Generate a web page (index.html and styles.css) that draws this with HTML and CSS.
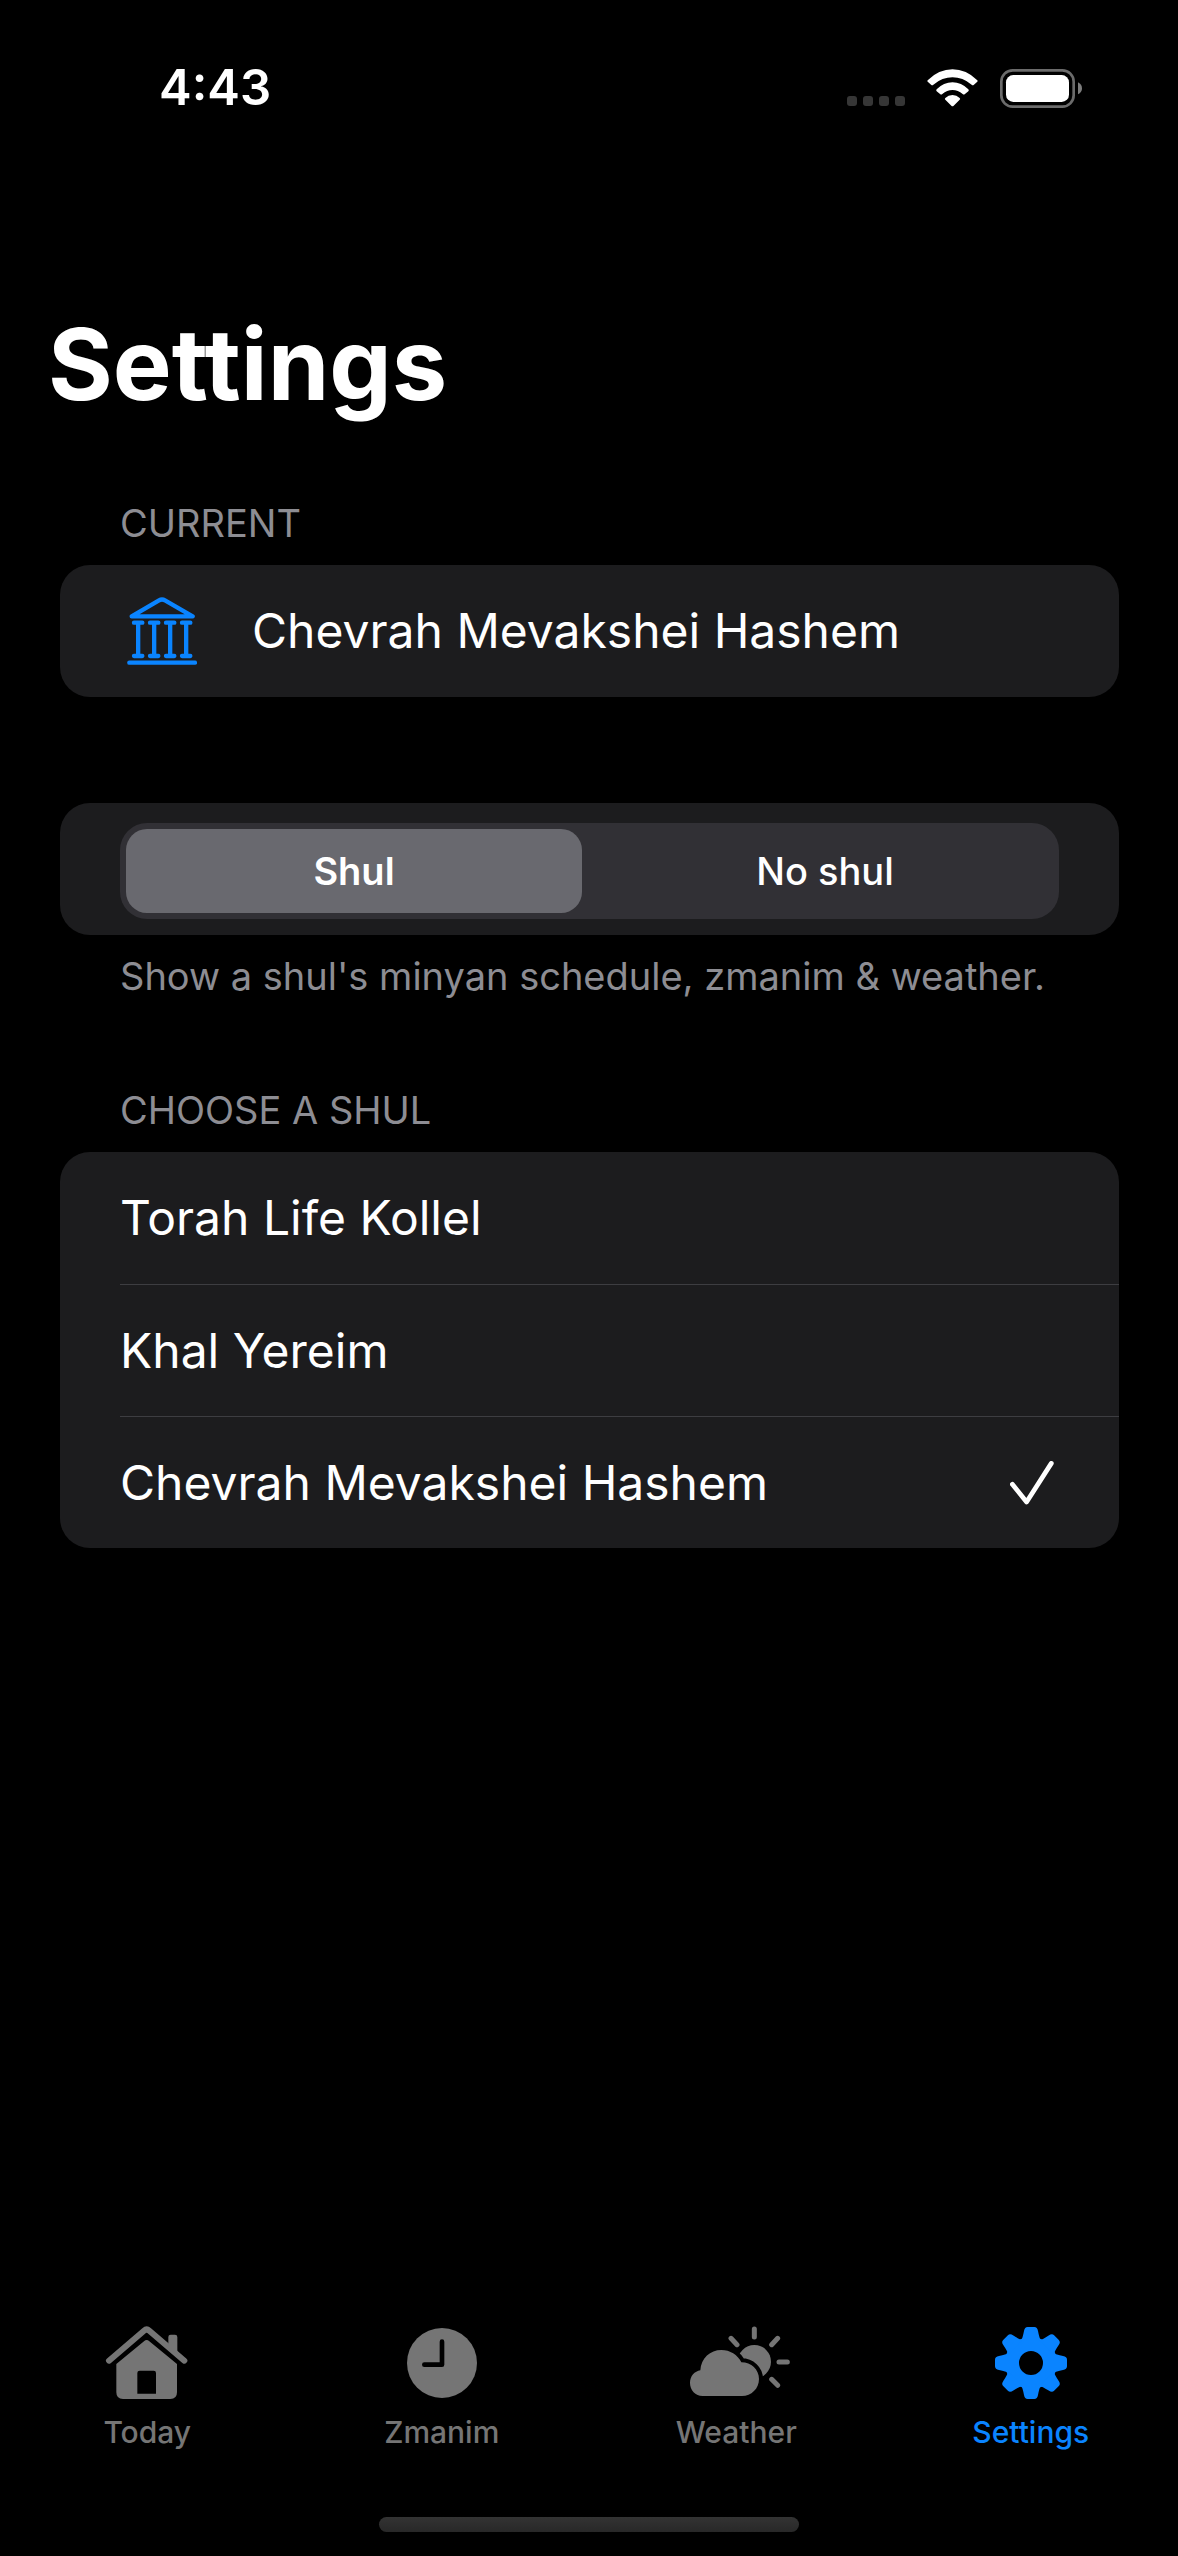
FILE: index.html
```html
<!DOCTYPE html>
<html lang="en">
<head>
<meta charset="utf-8">
<meta name="viewport" content="width=device-width, initial-scale=1">
<title>Settings</title>
<link rel="stylesheet" href="styles.css">
</head>
<body>
<div class="app">
  <header class="status-bar">
    <time class="clock">4:43</time>
    <div class="status-icons">
      <svg class="cell-icon" viewBox="0 0 58 10" aria-hidden="true"><rect width="10" height="10" rx="3"/><rect x="16" width="10" height="10" rx="3"/><rect x="32" width="10" height="10" rx="3"/><rect x="48" width="10" height="10" rx="3"/></svg>
      <svg class="wifi-icon" viewBox="0 0 153 114" aria-hidden="true"><path d="M3 33Q-1 36 3 39L13 48Q16 50 19 47Q46 25 76.500 25T134 47Q137 50 140 48L150 39Q154 36 150 33Q117 1 76.500 1T3 33Z"/><path d="M29 61Q26 64 29 67L40 76Q43 78 46 75Q60 63 76.500 63T107 75Q110 78 113 76L124 67Q127 64 124 61Q103 40 76.500 40T29 61Z"/><path d="M55 87Q52 90 55 92L73 110Q76.500 114 80 110L98 92Q101 90 98 87Q89 78 76.500 78T55 87Z"/></svg>
      <svg class="battery-icon" viewBox="0 0 246 117" aria-hidden="true"><rect x="4" y="4" width="217" height="109" rx="34" fill="none" stroke="#6b6b6b" stroke-width="8"/><rect x="18" y="18" width="189" height="81" rx="22" fill="#fff"/><path d="M234 40Q246 46 246 58T234 76Z" fill="#7d7d7d"/></svg>
    </div>
  </header>

  <main class="content">
    <h1 class="title">Settings</h1>

    <section class="group">
      <h2 class="group-title">CURRENT</h2>
      <div class="card">
        <div class="row current">
          <svg class="shul-icon" viewBox="0 0 210 204" aria-hidden="true"><path d="M14 58L96 10Q105 5 114 10L197 58Z"/><path d="M7 197H204"/><path d="M21 77H46M33.500 77V177M21 177H46M69 77H94M81.500 77V177M69 177H94M117 77H142M129.500 77V177M117 177H142M165 77H190M177.500 77V177M165 177H190"/></svg>
          <span>Chevrah Mevakshei Hashem</span>
        </div>
      </div>
    </section>

    <section class="group mode">
      <div class="card segment-card">
        <div class="segments" role="radiogroup" aria-label="Mode">
          <label class="segment"><input type="radio" name="mode" checked><span>Shul</span></label>
          <label class="segment"><input type="radio" name="mode"><span>No shul</span></label>
        </div>
      </div>
      <p class="hint">Show a shul's minyan schedule, zmanim &amp; weather.</p>
    </section>

    <section class="group choose">
      <h2 class="group-title">CHOOSE A SHUL</h2>
      <div class="card" role="radiogroup" aria-label="Choose a shul">
        <label class="row option"><input type="radio" name="shul"><span>Torah Life Kollel</span><svg class="check" viewBox="0 0 130 130" aria-hidden="true"><path d="M7 69L49 121L122 7"/></svg></label>
        <label class="row option"><input type="radio" name="shul"><span>Khal Yereim</span><svg class="check" viewBox="0 0 130 130" aria-hidden="true"><path d="M7 69L49 121L122 7"/></svg></label>
        <label class="row option"><input type="radio" name="shul" checked><span>Chevrah Mevakshei Hashem</span><svg class="check" viewBox="0 0 130 130" aria-hidden="true"><path d="M7 69L49 121L122 7"/></svg></label>
      </div>
    </section>
  </main>

  <nav class="tab-bar" aria-label="Main">
    <a class="tab" href="#today">
      <svg class="tab-icon" viewBox="0 0 300 270" aria-hidden="true"><path fill="none" stroke="currentColor" stroke-width="18" stroke-linecap="round" stroke-linejoin="round" d="M36 134L141 44Q149 37 157 44L262 134"/><path fill="currentColor" d="M214 63Q214 56 221 56H234Q241 56 241 63V112L214 88ZM58 144L141 76Q149 68 157 76L240 144V229Q240 249 220 249H78Q58 249 58 229ZM121 171V233H177V171Q177 164 170 164H128Q121 164 121 171Z" fill-rule="evenodd"/></svg>
      <span>Today</span>
    </a>
    <a class="tab" href="#zmanim">
      <svg class="tab-icon" viewBox="0 0 300 270" aria-hidden="true"><circle cx="150" cy="141" r="105" fill="currentColor"/><path d="M150 77V146H97" fill="none" stroke="#000" stroke-width="14" stroke-linecap="round" stroke-linejoin="round"/></svg>
      <span>Zmanim</span>
    </a>
    <a class="tab" href="#weather">
      <svg class="tab-icon wide" viewBox="-12 0 348 270" aria-hidden="true"><circle cx="217" cy="137" r="50" fill="currentColor"/><path fill="currentColor" stroke="#000" stroke-width="24" paint-order="stroke" d="M62 240C40 240 24 222 24 201C24 180 38 166 55 163C57 126 85 102 118 102C144 102 167 116 178 139C208 139 231 161 231 189C231 218 208 240 180 240Z"/><path d="M217 39V63M147 67L165 86M287 67L269 86M291 138H316M269 190L287 208" fill="none" stroke="currentColor" stroke-width="15" stroke-linecap="round"/></svg>
      <span>Weather</span>
    </a>
    <a class="tab active" href="#settings" aria-current="page">
      <svg class="tab-icon" viewBox="0 0 300 270" aria-hidden="true">
        <defs><path id="tooth" d="M-30 -66Q-25 -75 -21 -96Q-19 -108 -10 -108H10Q19 -108 21 -96Q25 -75 30 -66Z"/></defs>
        <g transform="translate(150 141)" fill="currentColor">
          <circle r="57" fill="none" stroke="currentColor" stroke-width="42"/>
          <use href="#tooth"/><use href="#tooth" transform="rotate(45)"/><use href="#tooth" transform="rotate(90)"/><use href="#tooth" transform="rotate(135)"/><use href="#tooth" transform="rotate(180)"/><use href="#tooth" transform="rotate(225)"/><use href="#tooth" transform="rotate(270)"/><use href="#tooth" transform="rotate(315)"/>
        </g>
      </svg>
      <span>Settings</span>
    </a>
  </nav>
  <div class="home-indicator"></div>
</div>
</body>
</html>
```
FILE: styles.css
```css
* { box-sizing: border-box; }
body { margin: 0; background: #000; color: #fff; font-family: Inter, "Liberation Sans", sans-serif; }
.app { min-height: 100vh; display: flex; flex-direction: column; }

.status-bar { display: flex; justify-content: space-between; align-items: center; height: 176px; padding: 0 96px 0 159px; }
.clock { font-size: 49px; line-height: 60px; font-weight: 600; }
.status-icons { display: flex; align-items: center; }
.cell-icon { width: 58px; height: 10px; fill: #363636; margin: 26px 22px 0 0; }
.wifi-icon { width: 51px; height: 38px; fill: #fff; margin-right: 22px; }
.battery-icon { width: 82px; height: 39px; }

.content { flex: 1; padding: 132px 59px 0 60px; }
.title { margin: 0 -12px; font-size: 99px; line-height: 112px; font-weight: 700; }
.group { margin-top: 78px; }
.group-title { margin: 0; padding: 0 60px 17px; font-size: 38px; line-height: 50px; font-weight: 400; color: #8d8d93; }
.card { background: #1c1c1e; border-radius: 30px; overflow: hidden; }
.row { display: flex; align-items: center; height: 132px; padding: 0 60px; font-size: 48px; line-height: 60px; }
.shul-icon { width: 70px; height: 68px; margin: 0 55px 0 7px; fill: none; stroke: #0a84ff; stroke-width: 13; stroke-linecap: round; stroke-linejoin: round; }

.mode { margin-top: 106px; }
.segment-card { padding: 20px 60px 16px; }
.segments { display: grid; grid-template-columns: 1fr 1fr; gap: 15px; height: 96px; padding: 6px; border-radius: 27px; background: #313035; }
.segment { position: relative; display: flex; align-items: center; justify-content: center; border-radius: 21px; font-size: 38px; font-weight: 500; }
.segment:has(:checked) { background: #69696f; font-weight: 600; }
.segment input, .option input { position: absolute; opacity: 0; margin: 0; }
.hint { margin: 0; padding: 16px 60px 0; font-size: 38px; line-height: 50px; color: #8d8d93; }
.choose { margin-top: 84px; }

.option { position: relative; justify-content: space-between; margin-left: 60px; padding: 0 65px 0 0; }
.option + .option { border-top: 1px solid #3d3d41; }
.check { width: 44px; height: 44px; visibility: hidden; fill: none; stroke: #fff; stroke-width: 14; stroke-linecap: round; stroke-linejoin: round; }
.option :checked ~ .check { visibility: visible; }

.tab-bar { display: grid; grid-template-columns: repeat(4, 1fr); }
.tab { display: flex; flex-direction: column; align-items: center; color: #757575; text-decoration: none; font-size: 30px; line-height: 36px; font-weight: 500; }
.tab-icon { width: 100px; height: 90px; margin-bottom: 8px; }
.tab-icon.wide { width: 116px; }
.tab.active { color: #0a84ff; }
.home-indicator { width: 420px; height: 15px; margin: 67px auto 24px; border-radius: 8px; background: linear-gradient(#333, #282828); }
```
